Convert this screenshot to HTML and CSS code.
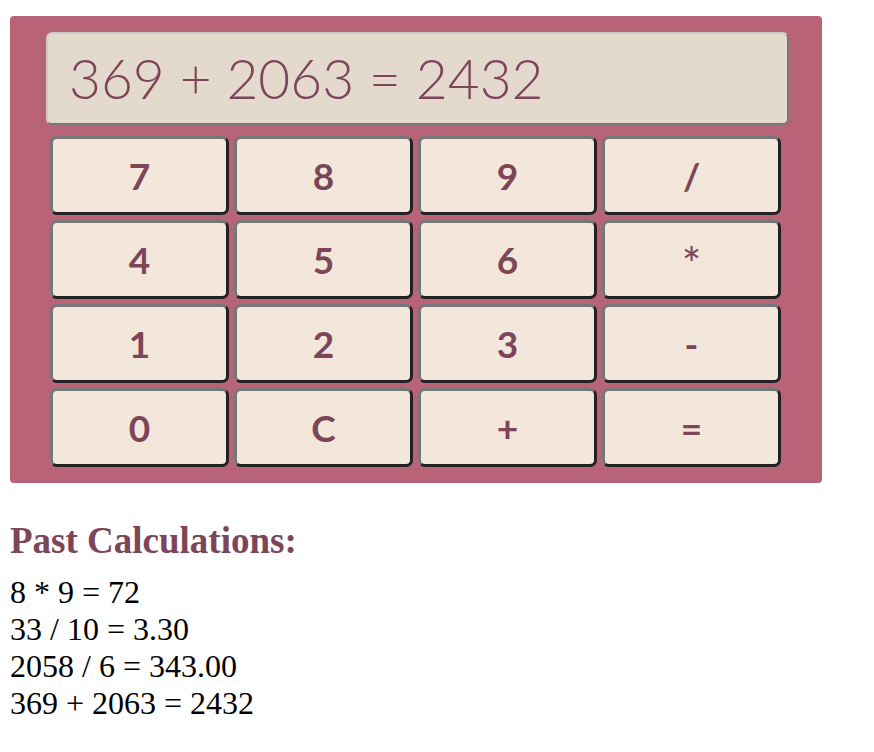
FILE: index.html
```html
<!DOCTYPE html>
<html>
<head>
<meta charset="utf-8">
<link rel="stylesheet" href="styles.css">
</head>
<body>
<div class="calc">
  <div class="display">369 + 2063 = 2432</div>
  <div class="keys">
    <button class="key">7</button>
    <button class="key">8</button>
    <button class="key">9</button>
    <button class="key">/</button>
    <button class="key">4</button>
    <button class="key">5</button>
    <button class="key">6</button>
    <button class="key star">*</button>
    <button class="key">1</button>
    <button class="key">2</button>
    <button class="key">3</button>
    <button class="key">-</button>
    <button class="key">0</button>
    <button class="key">C</button>
    <button class="key">+</button>
    <button class="key">=</button>
  </div>
</div>
<h2 class="past-title">Past Calculations:</h2>
<div class="history">
  <div class="entry">8 * 9 = 72</div>
  <div class="entry">33 / 10 = 3.30</div>
  <div class="entry">2058 / 6 = 343.00</div>
  <div class="entry">369 + 2063 = 2432</div>
</div>
</body>
</html>
```

FILE: styles.css
```css
html, body {
  margin: 0;
  padding: 0;
  background: #ffffff;
}
body {
  padding: 16px 10px 0 10px;
  font-family: "Liberation Serif", "Times New Roman", serif;
}
.calc {
  width: 812px;
  box-sizing: border-box;
  background: #b86377;
  border-radius: 4px;
  padding: 16px 0 16px 0;
}
.display {
  margin-left: 36px;
  width: 743px;
  height: 93px;
  box-sizing: border-box;
  background: #e4d9cd;
  border: 2px solid;
  border-color: #cfc9c4 #7a7776 #7a7776 #cfc9c4;
  border-radius: 6px;
  font-family: Lato, "Open Sans", sans-serif;
  font-weight: 300;
  font-size: 55px;
  color: #7c4558;
  line-height: 89px;
  padding-left: 21px;
  white-space: nowrap;
}
.keys {
  margin-top: 11px;
  margin-left: 40px;
  display: grid;
  grid-template-columns: repeat(4, 179px);
  grid-template-rows: repeat(4, 79px);
  gap: 5px;
}
.key {
  margin: 0;
  padding: 0;
  background: #f3e6da;
  border: 3px solid;
  border-color: #777777 #222222 #222222 #777777;
  border-radius: 7px;
  font-family: Lato, "Open Sans", sans-serif;
  font-weight: 700;
  font-size: 37px;
  color: #7c4558;
  display: flex;
  align-items: center;
  justify-content: center;
}
.star {
  font-size: 46px;
  font-weight: 400;
  padding-top: 8px;
}
.past-title {
  margin: 37px 0 13px 0;
  font-size: 37px;
  font-weight: bold;
  color: #7c4558;
  line-height: 41px;
}
.history {
  font-size: 32px;
  color: #000000;
  line-height: 37px;
}
```
